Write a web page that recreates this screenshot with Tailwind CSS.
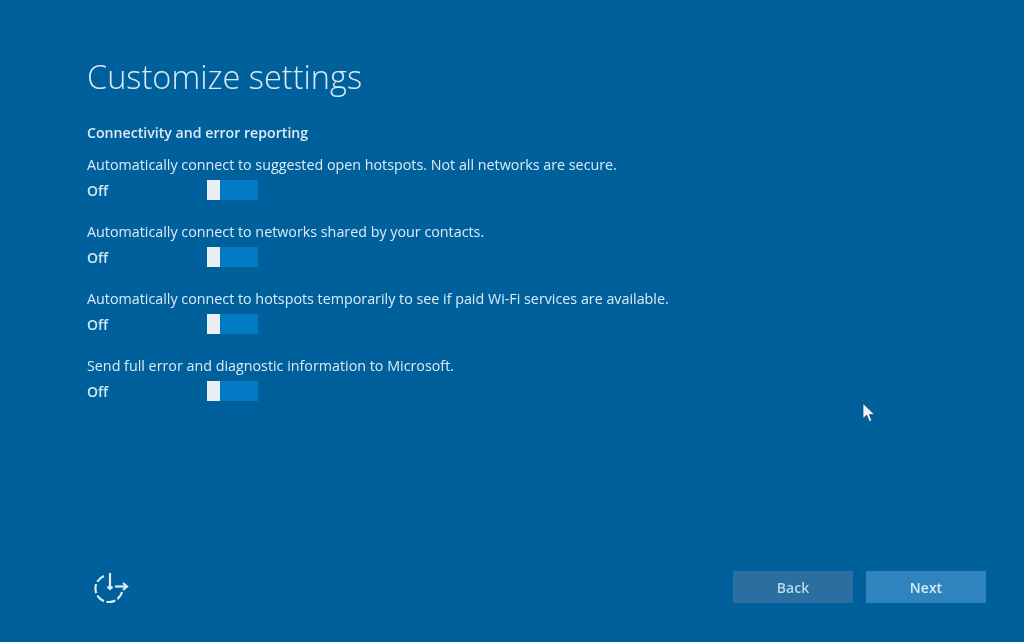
<!DOCTYPE html>
<html lang="en">

<head>
    <meta charset="UTF-8">
    <title>Customize settings</title>
    <script src="https://cdn.jsdelivr.net/npm/@tailwindcss/browser@4"></script>
</head>

<body class="bg-[#00609c]">
    <div class="relative h-[642px] w-[1024px] overflow-hidden flex flex-col font-['Open_Sans',sans-serif] text-[#dcebf5] blur-[0.4px]">
        <div class="flex-1 pl-[87px] pt-[55px]">
            <h1 class="text-[32.5px] leading-[44px] font-light text-[#d8e9f4]">Customize settings</h1>
            <h2 class="mt-[24px] text-[14.15px] leading-[20px] font-semibold">Connectivity and error reporting</h2>

            <div class="mt-[12px] flex flex-col gap-[22px]">
                <div>
                    <p class="text-[14.3px] leading-[20px]">Automatically connect to suggested open hotspots. Not all networks are secure.</p>
                    <div class="mt-[5px] flex items-center h-[20px]">
                        <span class="w-[120px] text-[14px] font-semibold text-[#d4e8f5]">Off</span>
                        <div class="flex h-[20px] w-[51px] bg-[#037ac4]"><div class="w-[13px] bg-[#e8eef2]"></div></div>
                    </div>
                </div>
                <div>
                    <p class="text-[14.3px] leading-[20px]">Automatically connect to networks shared by your contacts.</p>
                    <div class="mt-[5px] flex items-center h-[20px]">
                        <span class="w-[120px] text-[14px] font-semibold text-[#d4e8f5]">Off</span>
                        <div class="flex h-[20px] w-[51px] bg-[#037ac4]"><div class="w-[13px] bg-[#e8eef2]"></div></div>
                    </div>
                </div>
                <div>
                    <p class="text-[14.3px] leading-[20px]">Automatically connect to hotspots temporarily to see if paid Wi-Fi services are available.</p>
                    <div class="mt-[5px] flex items-center h-[20px]">
                        <span class="w-[120px] text-[14px] font-semibold text-[#d4e8f5]">Off</span>
                        <div class="flex h-[20px] w-[51px] bg-[#037ac4]"><div class="w-[13px] bg-[#e8eef2]"></div></div>
                    </div>
                </div>
                <div>
                    <p class="text-[14.3px] leading-[20px]">Send full error and diagnostic information to Microsoft.</p>
                    <div class="mt-[5px] flex items-center h-[20px]">
                        <span class="w-[120px] text-[14px] font-semibold text-[#d4e8f5]">Off</span>
                        <div class="flex h-[20px] w-[51px] bg-[#037ac4]"><div class="w-[13px] bg-[#e8eef2]"></div></div>
                    </div>
                </div>
            </div>
        </div>

        <div class="flex items-center justify-between pl-[93px] pr-[38px] pb-[39px]">
            <svg width="36" height="32" viewBox="0 0 36 32" fill="none" stroke="#dcecf6" stroke-width="2.2">
                <path d="M11 5A13.5 13.5 0 1 0 29 21" stroke-dasharray="9 2.5"/>
                <path d="M17 2V18"/>
                <path d="M14.5 15.5L17 18L19.5 15.5"/>
                <path d="M22 15.5H34"/>
                <path d="M30 12L34 15.5L30 19"/>
            </svg>
            <div class="flex gap-[13px]">
                <button class="h-[32px] w-[120px] bg-[#2a6f9f] text-[14px] font-semibold text-[#b5d9f0]">Back</button>
                <button class="h-[32px] w-[120px] bg-[#2f84bd] text-[14px] font-semibold text-[#d5ebf8]">Next</button>
            </div>
        </div>

        <svg class="absolute left-[862px] top-[403px]" width="14" height="20" viewBox="0 0 14 20">
            <path d="M1 0.5V15.5L4.8 12.2L7.4 18.5L9.8 17.5L7.4 11.6H12.5Z" fill="#f2f6f9" stroke="#14425f" stroke-width="0.7"/>
        </svg>
    </div>
</body>

</html>
